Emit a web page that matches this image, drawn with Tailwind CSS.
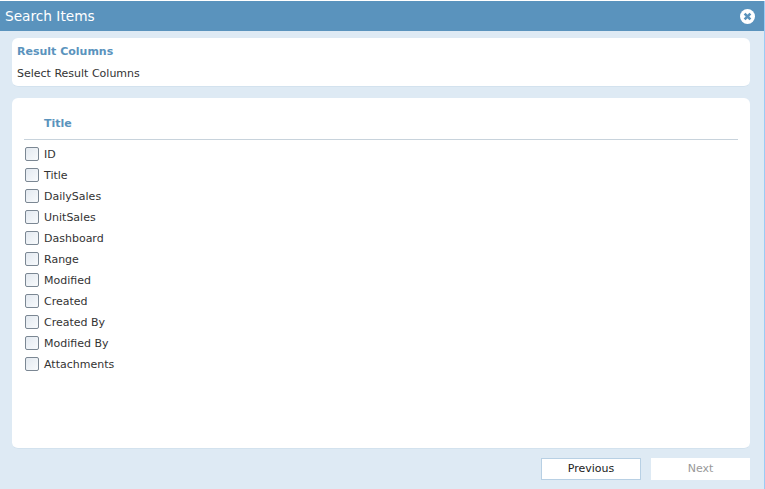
<!DOCTYPE html>
<html><head><script src="https://cdn.jsdelivr.net/npm/@tailwindcss/browser@4"></script></head>
<body class="bg-white">
<div class="w-[765px] h-[488px] mt-px bg-[#deeaf4] border-r border-[#9ccbf5] flex flex-col font-['DejaVu_Sans',sans-serif] text-[11px] text-[#333] overflow-hidden">
  <div class="h-[30px] shrink-0 bg-[#5a93bd] flex items-center justify-between pl-[5px] pr-[9px] text-white text-[13.7px]">
    <span>Search Items</span>
    <svg class="w-[15px] h-[15px]" viewBox="0 0 15 15"><circle cx="7.5" cy="7.5" r="7.5" fill="#fff"/><path d="M4.6 4.6L10.4 10.4M10.4 4.6L4.6 10.4" stroke="#5a93bd" stroke-width="2.6"/></svg>
  </div>
  <div class="ml-3 mr-[14px] mt-[7px] h-[49px] shrink-0 bg-white rounded-md px-[5px] pt-[7px] border-b border-[#d3e2ee]">
    <div class="font-bold text-[#5a93bd] leading-[14px]">Result Columns</div>
    <div class="mt-2 leading-[14px]">Select Result Columns</div>
  </div>
  <div class="ml-3 mr-[14px] mt-[11px] h-[351px] shrink-0 bg-white rounded-md px-3 border-b border-[#d3e2ee]">
    <div class="h-[42px] pl-5 pt-[19px] border-b border-[#c8d3dc] font-bold text-[#5a93bd] leading-[14px]">Title</div>
    <div class="flex flex-col pt-[5px]">
      <label class="h-[21px] flex items-center gap-[5px] pl-px"><span class="w-[14px] h-[14px] -translate-y-[2px] rounded-[2px] border border-[#7b8793] bg-gradient-to-br from-[#e3e9f0] to-[#f8fafc]"></span>ID</label>
      <label class="h-[21px] flex items-center gap-[5px] pl-px"><span class="w-[14px] h-[14px] -translate-y-[2px] rounded-[2px] border border-[#7b8793] bg-gradient-to-br from-[#e3e9f0] to-[#f8fafc]"></span>Title</label>
      <label class="h-[21px] flex items-center gap-[5px] pl-px"><span class="w-[14px] h-[14px] -translate-y-[2px] rounded-[2px] border border-[#7b8793] bg-gradient-to-br from-[#e3e9f0] to-[#f8fafc]"></span>DailySales</label>
      <label class="h-[21px] flex items-center gap-[5px] pl-px"><span class="w-[14px] h-[14px] -translate-y-[2px] rounded-[2px] border border-[#7b8793] bg-gradient-to-br from-[#e3e9f0] to-[#f8fafc]"></span>UnitSales</label>
      <label class="h-[21px] flex items-center gap-[5px] pl-px"><span class="w-[14px] h-[14px] -translate-y-[2px] rounded-[2px] border border-[#7b8793] bg-gradient-to-br from-[#e3e9f0] to-[#f8fafc]"></span>Dashboard</label>
      <label class="h-[21px] flex items-center gap-[5px] pl-px"><span class="w-[14px] h-[14px] -translate-y-[2px] rounded-[2px] border border-[#7b8793] bg-gradient-to-br from-[#e3e9f0] to-[#f8fafc]"></span>Range</label>
      <label class="h-[21px] flex items-center gap-[5px] pl-px"><span class="w-[14px] h-[14px] -translate-y-[2px] rounded-[2px] border border-[#7b8793] bg-gradient-to-br from-[#e3e9f0] to-[#f8fafc]"></span>Modified</label>
      <label class="h-[21px] flex items-center gap-[5px] pl-px"><span class="w-[14px] h-[14px] -translate-y-[2px] rounded-[2px] border border-[#7b8793] bg-gradient-to-br from-[#e3e9f0] to-[#f8fafc]"></span>Created</label>
      <label class="h-[21px] flex items-center gap-[5px] pl-px"><span class="w-[14px] h-[14px] -translate-y-[2px] rounded-[2px] border border-[#7b8793] bg-gradient-to-br from-[#e3e9f0] to-[#f8fafc]"></span>Created By</label>
      <label class="h-[21px] flex items-center gap-[5px] pl-px"><span class="w-[14px] h-[14px] -translate-y-[2px] rounded-[2px] border border-[#7b8793] bg-gradient-to-br from-[#e3e9f0] to-[#f8fafc]"></span>Modified By</label>
      <label class="h-[21px] flex items-center gap-[5px] pl-px"><span class="w-[14px] h-[14px] -translate-y-[2px] rounded-[2px] border border-[#7b8793] bg-gradient-to-br from-[#e3e9f0] to-[#f8fafc]"></span>Attachments</label>
    </div>
  </div>
  <div class="flex justify-end gap-[10px] mt-[9px] mr-[14px]">
    <button class="w-[100px] h-[22px] bg-white border border-[#b8d0e4] text-[#222]">Previous</button>
    <button class="w-[99px] h-[22px] bg-white text-[#999]">Next</button>
  </div>
</div>
</body></html>
